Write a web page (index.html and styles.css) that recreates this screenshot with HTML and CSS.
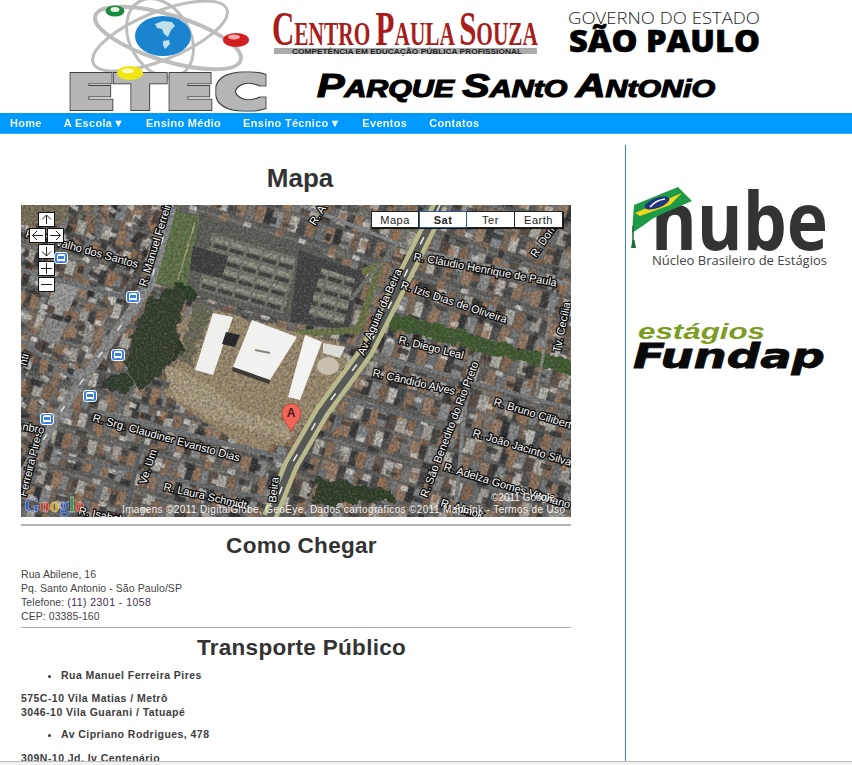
FILE: index.html
```html
<!DOCTYPE html>
<html lang="pt-BR">
<head>
<meta charset="utf-8">
<title>ETEC Parque Santo Antonio - Mapa</title>
<link rel="stylesheet" href="styles.css">
</head>
<body>
<header class="banner">
<svg class="banner-art" width="852" height="113" viewBox="0 0 852 113">
  <defs>
    <filter id="fat" x="-5%" y="-15%" width="110%" height="130%">
      <feMorphology in="SourceAlpha" operator="dilate" radius="2.500" result="outer"/>
      <feFlood flood-color="#3f3f3f"/>
      <feComposite in2="outer" operator="in" result="edge"/>
      <feMorphology in="SourceAlpha" operator="dilate" radius="1.500" result="inner"/>
      <feFlood flood-color="#b6b6b6"/>
      <feComposite in2="inner" operator="in" result="body"/>
      <feMerge><feMergeNode in="edge"/><feMergeNode in="body"/></feMerge>
    </filter>
  </defs>
  <g fill="none" stroke="#bdbdbd">
    <ellipse cx="168" cy="38" rx="76" ry="23" stroke-width="4" transform="rotate(17 168 38)"/>
    <ellipse cx="160" cy="36" rx="72" ry="24" stroke-width="3" transform="rotate(-22 160 36)"/>
    <ellipse cx="160" cy="38" rx="42" ry="30" stroke-width="3" transform="rotate(60 160 38)"/>
  </g>
  <ellipse cx="163" cy="36" rx="28" ry="20" fill="#1b84cf"/>
  <path d="M155 24l8-3 9 1 3 4-4 4-3 7-4-3-2-5-5-1zM163 41l6-1 1 4-5 5-2-4z" fill="#bfe0ea"/>
  <text class="logo-etec" x="66" y="108" textLength="202" lengthAdjust="spacingAndGlyphs" filter="url(#fat)">ETEC</text>
  <ellipse cx="115" cy="11" rx="9.500" ry="5.500" fill="#1c8a3e"/><ellipse cx="115" cy="9.500" rx="4.500" ry="2.500" fill="#e4f3e6"/>
  <ellipse cx="236" cy="40" rx="13" ry="7" fill="#d21e1e"/><ellipse cx="234" cy="37" rx="6" ry="2.500" fill="#f5a8a8"/>
  <ellipse cx="130" cy="73" rx="13" ry="7" fill="#f3e60f"/><ellipse cx="128" cy="71" rx="6" ry="2.500" fill="#fffbc4"/>

  <text class="logo-cps" x="272" y="45" textLength="266" lengthAdjust="spacingAndGlyphs"><tspan class="cap">C</tspan>ENTRO <tspan class="cap">P</tspan>AULA <tspan class="cap">S</tspan>OUZA</text>
  <rect x="274" y="48" width="263" height="6" fill="#ababab"/>
  <text class="logo-cps-sub" x="292" y="53.500" textLength="230" lengthAdjust="spacingAndGlyphs">COMPETÊNCIA EM EDUCAÇÃO PÚBLICA PROFISSIONAL</text>

  <text class="logo-gov" x="568" y="24" textLength="192" lengthAdjust="spacingAndGlyphs">GOVERNO DO ESTADO</text>
  <text class="logo-sp" x="569" y="52" textLength="191" lengthAdjust="spacingAndGlyphs">SÃO PAULO</text>

  <text class="logo-parque" x="317" y="97" textLength="398" lengthAdjust="spacingAndGlyphs"><tspan class="cap">P</tspan>ARQUE <tspan class="cap">S</tspan>ANtO <tspan class="cap">A</tspan>NtONiO</text>
</svg>
</header>

<nav class="menu">
  <a href="#">Home</a>
  <a href="#">A Escola <span class="caret">▼</span></a>
  <a href="#">Ensino Médio</a>
  <a href="#">Ensino Técnico <span class="caret">▼</span></a>
  <a href="#">Eventos</a>
  <a href="#">Contatos</a>
</nav>

<div class="page">
  <main class="content">
    <h1 class="title">Mapa</h1>
    <div class="map">
      <svg class="map-art" width="550" height="312" viewBox="21 205 550 312">
        <defs>
          <g id="block">
            <rect width="96" height="60" fill="#585956"/>
            <rect y="0" width="96" height="4" fill="#6e6f6c"/>
            <rect x="1" y="6" width="11" height="22" fill="#83674f"/><rect x="13" y="7" width="9" height="21" fill="#6c6f72"/><rect x="23" y="6" width="12" height="20" fill="#a8a59c"/><rect x="36" y="8" width="9" height="20" fill="#333537"/><rect x="46" y="6" width="11" height="22" fill="#967459"/><rect x="58" y="7" width="10" height="19" fill="#7e8285"/><rect x="69" y="6" width="12" height="21" fill="#4c423a"/><rect x="82" y="7" width="13" height="20" fill="#b5b3ab"/>
            <rect x="2" y="31" width="10" height="23" fill="#6f7477"/><rect x="13" y="32" width="12" height="22" fill="#987a62"/><rect x="26" y="31" width="9" height="21" fill="#2a2c2e"/><rect x="36" y="32" width="13" height="22" fill="#8a8e90"/><rect x="50" y="31" width="9" height="23" fill="#75604f"/><rect x="60" y="33" width="11" height="20" fill="#c4c2ba"/><rect x="72" y="31" width="10" height="23" fill="#424548"/><rect x="83" y="32" width="12" height="21" fill="#8e7059"/>
          </g>
          <g id="patches">
            <rect x="3" y="4" width="9" height="6" fill="#eceae4" opacity=".8"/><rect x="20" y="12" width="14" height="7" fill="#17181a" opacity=".7"/><rect x="44" y="2" width="8" height="12" fill="#a9754f" opacity=".7"/><rect x="58" y="22" width="10" height="6" fill="#e0ded8" opacity=".7"/><rect x="8" y="27" width="12" height="8" fill="#8c6448" opacity=".65"/><rect x="34" y="31" width="7" height="9" fill="#131416" opacity=".7"/><rect x="50" y="34" width="15" height="5" fill="#232426" opacity=".6"/>
          </g>
          <pattern id="city-east" width="96" height="60" patternUnits="userSpaceOnUse" patternTransform="translate(7 9) rotate(17) scale(.75)"><use href="#block"/></pattern>
          <pattern id="city-west" width="96" height="60" patternUnits="userSpaceOnUse" patternTransform="translate(3 20) rotate(15) scale(.7)"><use href="#block"/></pattern>
          <pattern id="over-east" width="71" height="43" patternUnits="userSpaceOnUse" patternTransform="translate(12 3) rotate(17) scale(.8)"><use href="#patches"/></pattern>
          <pattern id="over-west" width="71" height="43" patternUnits="userSpaceOnUse" patternTransform="rotate(40) scale(.8)"><use href="#patches"/></pattern>
          <pattern id="substation" width="17" height="14" patternUnits="userSpaceOnUse" patternTransform="rotate(16)">
            <rect width="17" height="14" fill="#77786c"/><rect x="1" y="1" width="14" height="4" fill="#98998a"/><rect x="1" y="7" width="14" height="4" fill="#3c3e3a"/>
          </pattern>
          <filter id="grain" x="0" y="0" width="100%" height="100%">
            <feTurbulence type="fractalNoise" baseFrequency=".38" numOctaves="2" seed="4"/>
            <feColorMatrix values="0 0 0 0 .04  0 0 0 0 .04  0 0 0 0 .04  1.7 0 0 0 -.52"/>
          </filter>
          <filter id="grain-light" x="0" y="0" width="100%" height="100%">
            <feTurbulence type="fractalNoise" baseFrequency=".45" numOctaves="2" seed="13"/>
            <feColorMatrix values="0 0 0 0 1  0 0 0 0 1  0 0 0 0 .95  1.7 0 0 0 -.75"/>
          </filter>
          <filter id="tint" x="0" y="0" width="100%" height="100%">
            <feTurbulence type="fractalNoise" baseFrequency=".04" numOctaves="2" seed="7"/>
            <feColorMatrix values="0 0 0 0 .5  0 0 0 0 .36  0 0 0 0 .26  2.4 0 0 0 -.95"/>
          </filter>
          <filter id="rough" x="-10%" y="-10%" width="120%" height="120%">
            <feTurbulence type="fractalNoise" baseFrequency=".09" numOctaves="3" seed="3" result="n"/>
            <feDisplacementMap in="SourceGraphic" in2="n" scale="14"/>
          </filter>
        </defs>
        <rect x="21" y="205" width="550" height="312" fill="url(#city-east)"/>
        <polygon points="21,205 172,205 100,330 21,470" fill="url(#city-west)"/>
        <polygon points="21,420 100,350 130,410 270,440 262,517 21,517" fill="url(#city-west)"/>
        <rect x="21" y="205" width="550" height="312" fill="url(#over-east)"/>
        <polygon points="21,205 172,205 100,330 21,470" fill="url(#over-west)"/>
        <rect x="21" y="205" width="550" height="312" filter="url(#tint)" opacity=".3"/>

        <polygon points="57,279 80,287 68,312 47,304" fill="#a2a3a1"/>
        <polygon points="47,317 67,323 58,346 38,338" fill="#8f908e"/>
        <polygon points="21,205 70,205 66,222 21,225" fill="#7a7158"/>

        <polygon points="173,208 300,243 362,273 347,330 290,323 153,283" fill="#5c5f56"/>
        <polygon points="173,210 200,218 192,252 186,290 155,283" fill="#5f7544"/>
        <path d="M195 222L178 280" stroke="#a9a67e" stroke-width="1.500"/>
        <polygon points="212,232 297,258 284,314 198,290" fill="url(#substation)"/>
        <polygon points="193,246 228,256 222,278 190,270" fill="#3a3c3b"/>
        <polygon points="299,250 362,272 348,330 290,322" fill="#3f4140"/>
        <polygon points="322,268 355,279 343,326 308,316" fill="url(#substation)"/>
        <path d="M362 272L380 265L358 330L293 334" fill="none" stroke="#6b7843" stroke-width="7"/>

        <g filter="url(#rough)">
          <polygon points="180,325 195,305 345,345 345,385 292,440 260,455 210,425 165,395" fill="#a39070"/>
          <polygon points="165,365 210,385 240,410 300,425 285,440 215,420 170,395" fill="#b3a484"/>
          <polygon points="195,302 212,310 190,365 178,360" fill="#6c6a56"/>
          <ellipse cx="180" cy="293" rx="15" ry="9" fill="#24381f"/>
          <ellipse cx="158" cy="348" rx="24" ry="18" fill="#26331f"/>
          <polygon points="150,300 186,289 172,360 140,392 122,360" fill="#2d3a27"/>
          <ellipse cx="118" cy="382" rx="14" ry="10" fill="#2c3a28"/>
          <polygon points="393,312 574,362 574,376 388,328" fill="#3e5a2a"/>
          <polygon points="317,477 392,490 392,502 312,505" fill="#2a3a24"/>
        </g>

        <g fill="none" stroke-linecap="butt">
          <path d="M172 205L150 285L100 355L55 420L21 478" stroke="#8e908f" stroke-width="10"/>
          <path d="M21 270L135 300" stroke="#74787a" stroke-width="5"/>
          <path d="M21 340L95 395" stroke="#74787a" stroke-width="4"/>
          <path d="M90 410L300 462" stroke="#75787a" stroke-width="5"/>
          <path d="M55 455L275 500" stroke="#6d7072" stroke-width="4"/>
          <path d="M145 430L125 517" stroke="#5e6163" stroke-width="4"/>
          <path d="M350 300L430 205" stroke="#76796c" stroke-width="4"/>
          <path d="M300 205L415 250L575 285" stroke="#8a8d8d" stroke-width="4"/>
          <path d="M385 358L575 410" stroke="#7a7d7e" stroke-width="4"/>
          <path d="M340 398L575 460" stroke="#6c6f70" stroke-width="4"/>
          <path d="M470 355L455 515" stroke="#868989" stroke-width="4"/>
          <path d="M555 290L535 400" stroke="#898b8a" stroke-width="3"/>
        </g>
        <rect x="21" y="205" width="550" height="312" filter="url(#grain)" opacity=".6"/>
        <rect x="21" y="205" width="550" height="312" filter="url(#grain-light)" opacity=".25"/>

        <polygon points="213,313 233,317 213,375 195,370" fill="#eff0ee"/>
        <polygon points="226,332 240,335 235,347 222,344" fill="#26282a"/>
        <polygon points="252,320 297,337 270,380 233,367" fill="#f1f1ef"/>
        <line x1="255" y1="350" x2="270" y2="353" stroke="#85857f" stroke-width="2"/>
        <polygon points="233,367 270,380 269,384 232,371" fill="#3e3c35"/>
        <polygon points="305,335 322,342 300,400 288,397" fill="#f3f3f1"/>
        <polygon points="323,343 345,347 340,358 323,353" fill="#dedcd6"/>
        <ellipse cx="328" cy="366" rx="11" ry="9" fill="#c8bfb0"/>

        <g fill="none">
          <path d="M172 205L150 285L100 355L55 420L21 478" stroke="#e2e3e0" stroke-width="1.500" stroke-dasharray="7 26"/>
          <path d="M440 205L400 285L366 352L322 412L291 465L270 517" stroke="#b9b98a" stroke-width="16"/>
          <path d="M440 205L400 285L366 352L322 412L291 465L270 517" stroke="#565958" stroke-width="7"/>
          <path d="M440 205L400 285L366 352L322 412L291 465L270 517" stroke="#f0f0e4" stroke-width="1.500" stroke-dasharray="8 28"/>
        </g>

        <g class="map-label">
          <text transform="translate(146 287) rotate(-73)">R. Manuel Ferreira</text>
          <text transform="translate(137 268) rotate(15.500)" text-anchor="end">R. Carvalho dos Santos</text>
          <text transform="translate(92 421) rotate(15.500)">R. Srg. Claudiner Evaristo Dias</text>
          <text transform="translate(26 497) rotate(-76)">Ferreira Pires</text>
          <text transform="translate(146 485) rotate(-72)">Ve. Um</text>
          <text transform="translate(163 490) rotate(13)">R. Laura Schmidt</text>
          <text transform="translate(78 514) rotate(12)">R. Isabel</text>
          <text transform="translate(276 503) rotate(-84)">Beira</text>
          <text transform="translate(22 430) rotate(10)">nbro</text>
          <text transform="translate(26 366) rotate(-75)">nti</text>
          <text transform="translate(413 260) rotate(10.500)">R. Cláudio Henrique de Paula</text>
          <text transform="translate(364 356) rotate(-66)">Av. Aguiar da Beira</text>
          <text transform="translate(400 288) rotate(18.500)">R. Izis Dias de Oliveira</text>
          <text transform="translate(398 343) rotate(14)">R. Diego Leal</text>
          <text transform="translate(372 376) rotate(13)">R. Cândido Alves</text>
          <text transform="translate(427 498) rotate(-69)">R. São Benedito do Rio Preto</text>
          <text transform="translate(493 405) rotate(17)">R. Bruno Cilibert</text>
          <text transform="translate(472 436) rotate(17)">R. João Jacinto Silva</text>
          <text transform="translate(443 470) rotate(17)">R. Adelza Gomes Vitoriano</text>
          <text transform="translate(560 353) rotate(-78)">Tv. Cecília</text>
          <text transform="translate(536 258) rotate(-56)">R. Domi</text>
          <text transform="translate(315 226) rotate(-58)">R. A</text>
          <text transform="translate(440 506) rotate(17)">R. Almok</text>
        </g>

        <g class="map-credit">
          <text x="491" y="501">©2011 Google</text>
          <text x="122" y="513" textLength="443">Imagens ©2011 DigitalGlobe, GeoEye, Dados cartográficos ©2011 MapLink - Termos de Uso</text>
        </g>
        <text class="map-google" x="24" y="512"><tspan fill="#2a62d6">G</tspan><tspan fill="#d8392b">o</tspan><tspan fill="#e5b51f">o</tspan><tspan fill="#2a62d6">g</tspan><tspan fill="#3c9a3c">l</tspan><tspan fill="#d8392b">e</tspan></text>

        <path d="M291 432C288 424 282 420 282 413a9.500 9.500 0 0 1 19 0C301 420 294 424 291 432z" fill="#f2665a" stroke="#a53a33" stroke-width=".7"/>
        <text class="map-pin" x="291" y="417" text-anchor="middle">A</text>
      </svg>

      <div class="pan pan-up"><svg viewBox="0 0 15 13" width="15" height="13"><path d="M7.500 11V2M3 6.500L7.500 2L12 6.500" class="arrow"/></svg></div>
      <div class="pan pan-left"><svg viewBox="0 0 15 13" width="15" height="13"><path d="M13 6.500H3M7 2L2.500 6.500L7 11" class="arrow"/></svg></div>
      <div class="pan pan-right"><svg viewBox="0 0 15 13" width="15" height="13"><path d="M2 6.500H12M8 2L12.500 6.500L8 11" class="arrow"/></svg></div>
      <div class="pan pan-down"><svg viewBox="0 0 15 13" width="15" height="13"><path d="M7.500 2V11M3 6.500L7.500 11L12 6.500" class="arrow"/></svg></div>
      <div class="pan pan-plus"><svg viewBox="0 0 15 13" width="15" height="13"><path d="M2 6.500H13M7.500 1V12" class="arrow"/></svg></div>
      <div class="pan pan-minus"><svg viewBox="0 0 15 13" width="15" height="13"><path d="M2 6.500H13" class="arrow"/></svg></div>

      <span class="bus bus-1"><i></i></span>
      <span class="bus bus-2"><i></i></span>
      <span class="bus bus-3"><i></i></span>
      <span class="bus bus-4"><i></i></span>
      <span class="bus bus-5"><i></i></span>

      <div class="map-types">
        <span>Mapa</span>
        <span class="active">Sat</span>
        <span>Ter</span>
        <span>Earth</span>
      </div>
    </div>

    <hr class="rule rule-thick">
    <h2 class="heading">Como Chegar</h2>
    <p class="address">Rua Abilene, 16<br>Pq. Santo Antonio - São Paulo/SP<br>Telefone: <span class="phone">(11) 2301 - 1058</span><br>CEP: 03385-160</p>
    <hr class="rule rule-tight">
    <h2 class="heading heading-transport">Transporte Público</h2>
    <ul class="stops"><li>Rua Manuel Ferreira Pires</li></ul>
    <p class="lines">575C-10 Vila Matias / Metrô<br>3046-10 Vila Guarani / Tatuapé</p>
    <ul class="stops"><li>Av Cipriano Rodrigues, 478</li></ul>
    <p class="lines lines-last">309N-10 Jd. Iv Centenário</p>
  </main>

  <aside class="sidebar">
    <svg class="partner" width="226" height="100" viewBox="626 180 226 100">
      <text class="nube" x="651" y="250" textLength="177" lengthAdjust="spacingAndGlyphs">nube</text>
      <text class="nube-sub" x="652" y="265" textLength="175" lengthAdjust="spacingAndGlyphs">Núcleo Brasileiro de Estágios</text>
      <polygon points="634,205 678,187 692,201 664,213 652,219 644,225 632,233" fill="#1f9a46"/>
      <polygon points="635,213 682,193 670,205 640,216" fill="#f2d81d"/>
      <ellipse cx="657" cy="203" rx="13" ry="5" fill="#20357f" transform="rotate(-20 657 203)"/>
      <path d="M650 207Q656 200 665 199" stroke="#f4f4f4" stroke-width="1.500" fill="none"/>
      <path d="M633 226V246" stroke="#17703a" stroke-width="1.500"/>
      <path d="M631 248l1.500-8h2l1.500 8z" fill="#17703a"/>
    </svg>
    <svg class="partner partner-fundap" width="226" height="70" viewBox="626 315 226 70">
      <text class="fundap-top" x="638" y="339" textLength="127" lengthAdjust="spacingAndGlyphs">estágios</text>
      <text class="fundap" x="633" y="368" textLength="192" lengthAdjust="spacingAndGlyphs">Fundap</text>
    </svg>
  </aside>
</div>
<div class="window-edge"></div>
</body>
</html>
```
FILE: styles.css
```css
* { box-sizing: border-box; }
html, body { margin: 0; padding: 0; height: 765px; overflow: hidden; background: #fff; }
body { font-family: "Liberation Sans", Arial, sans-serif; color: #333; }

.banner { height: 113px; }
.banner-art { display: block; }
.banner-art .cap { font-size: 1.45em; }
.logo-etec { font: 700 45px "DejaVu Sans", sans-serif; fill: #b6b6b6; }
.logo-cps { font: 700 33px "Liberation Serif", serif; fill: #a81c1c; }
.logo-cps-sub { font: 700 7.500px "Liberation Sans", sans-serif; fill: #222; }
.logo-gov { font: 300 17px "Open Sans", sans-serif; fill: #222; }
.logo-sp { font: 800 30px "Open Sans", sans-serif; fill: #000; stroke: #000; stroke-width: .6px; }
.logo-parque { font: italic 700 24px "Liberation Sans", sans-serif; fill: #000; stroke: #000; stroke-width: 1.200px; }
.logo-parque .cap { font-size: 1.36em; }

.menu { display: flex; height: 21px; background: #0099ff; gap: 22px; padding-left: 10px; align-items: center; border-bottom: 1px solid #33adff; }
.menu a { color: #fff; font-size: 11px; font-weight: 700; letter-spacing: .3px; text-decoration: none; opacity: .95; }
.caret { font-size: 11px; letter-spacing: 0; margin-left: -2.500px; }

.page { display: flex; height: 631px; }
.content { width: 625px; padding-left: 21px; flex: none; }
.sidebar { flex: 1; margin-top: 11px; border-left: 1px solid #2b84cc; }
.partner { display: block; margin-top: 35px; }
.partner-fundap { margin-top: 35px; }
.nube { font: 700 80px "Open Sans", sans-serif; fill: #333; }
.nube-sub { font: 400 13px "Open Sans", sans-serif; fill: #444; }
.fundap-top { font: italic 700 22px "Liberation Sans", sans-serif; fill: #7d9c22; }
.fundap { font: italic 700 33px "DejaVu Sans", sans-serif; fill: #0a0a0a; stroke: #0a0a0a; stroke-width: .8px; }

.title { margin: 0; width: 558px; padding-top: 30px; height: 71px; font-size: 26px; line-height: 29px; text-align: center; color: #333; }

.map { position: relative; width: 550px; height: 312px; overflow: hidden; background: #555; }
.map-art { display: block; }
.map-label text { font: 11px "Liberation Sans", sans-serif; fill: #fff; stroke: #0a0a0a; stroke-width: 2.500px; paint-order: stroke; }
.map-credit text { font: 10px "Liberation Sans", sans-serif; fill: #f2f2f2; }
.map-google { font: 700 20px "Liberation Serif", serif; stroke: #fff; stroke-width: .3px; opacity: .85; }
.map-pin { font: 700 12px "Liberation Sans", sans-serif; fill: #4a1a16; }

.pan { position: absolute; width: 15px; height: 13px; background: #fff; outline: 1px solid #111; }
.pan svg { display: block; }
.arrow { fill: none; stroke: #222; stroke-width: 1; }
.pan-up { left: 18px; top: 8px; }
.pan-left { left: 9px; top: 24px; }
.pan-right { left: 27px; top: 24px; }
.pan-down { left: 18px; top: 40px; }
.pan-plus { left: 18px; top: 57px; }
.pan-minus { left: 18px; top: 73px; }

.bus { position: absolute; width: 14px; height: 12px; background: #3a7fd8; border: 1px solid #fff; border-radius: 3px; }
.bus i { display: block; width: 8px; height: 8px; margin: 1px auto 0; border-radius: 2px; background: linear-gradient(#fff 0 1px, #3a7fd8 1px 4px, #fff 4px 6px, #3a7fd8 6px); border: 1px solid #fff; border-bottom-width: 0; }
.bus-1 { left: 33px; top: 47px; }
.bus-2 { left: 105px; top: 86px; }
.bus-3 { left: 90px; top: 144px; }
.bus-4 { left: 62px; top: 185px; }
.bus-5 { left: 19px; top: 208px; }

.map-types { position: absolute; left: 350px; top: 6px; display: flex; background: #fff; box-shadow: 1px 1px 0 #111; }
.map-types span { width: 48px; height: 17px; font-size: 11px; line-height: 16px; text-align: center; color: #222; letter-spacing: .5px; border: 1px solid #222; border-left-width: 0; }
.map-types span:first-child { border-left-width: 1px; }
.map-types .active { font-weight: 700; border: 1px solid #2a5a9c; }

.rule { width: 550px; margin: 7px 0 0; border: 0; border-top: 1px solid #aaa; }
.rule-thick { border-top-width: 2px; border-top-color: #b3b3b3; }
.rule-tight { margin-top: 4px; }
.heading { margin: 0; width: 561px; height: 41px; padding-top: 8px; text-align: center; font-size: 22.500px; line-height: 24px; color: #333; letter-spacing: .3px; }
.heading-transport { height: 40px; }
.address { margin: 0; font-size: 10.500px; line-height: 14px; letter-spacing: .07px; color: #444; }
.phone { letter-spacing: .45px; color: #442a55; }
.stops { margin: 0; padding-left: 40px; font-size: 10.500px; line-height: 14px; font-weight: 700; letter-spacing: .45px; color: #3c3c3c; list-style: disc; }
.stops li::marker { font-size: 11px; }
.lines { margin: 9px 0 8px; font-size: 10.500px; line-height: 14px; font-weight: 700; letter-spacing: .45px; color: #3c3c3c; }
.lines-last { margin-top: 10px; }

.window-edge { position: fixed; left: 0; right: 0; bottom: 0; height: 4px; background: #f1f1f1; border-top: 1px solid #bbb; }
```
